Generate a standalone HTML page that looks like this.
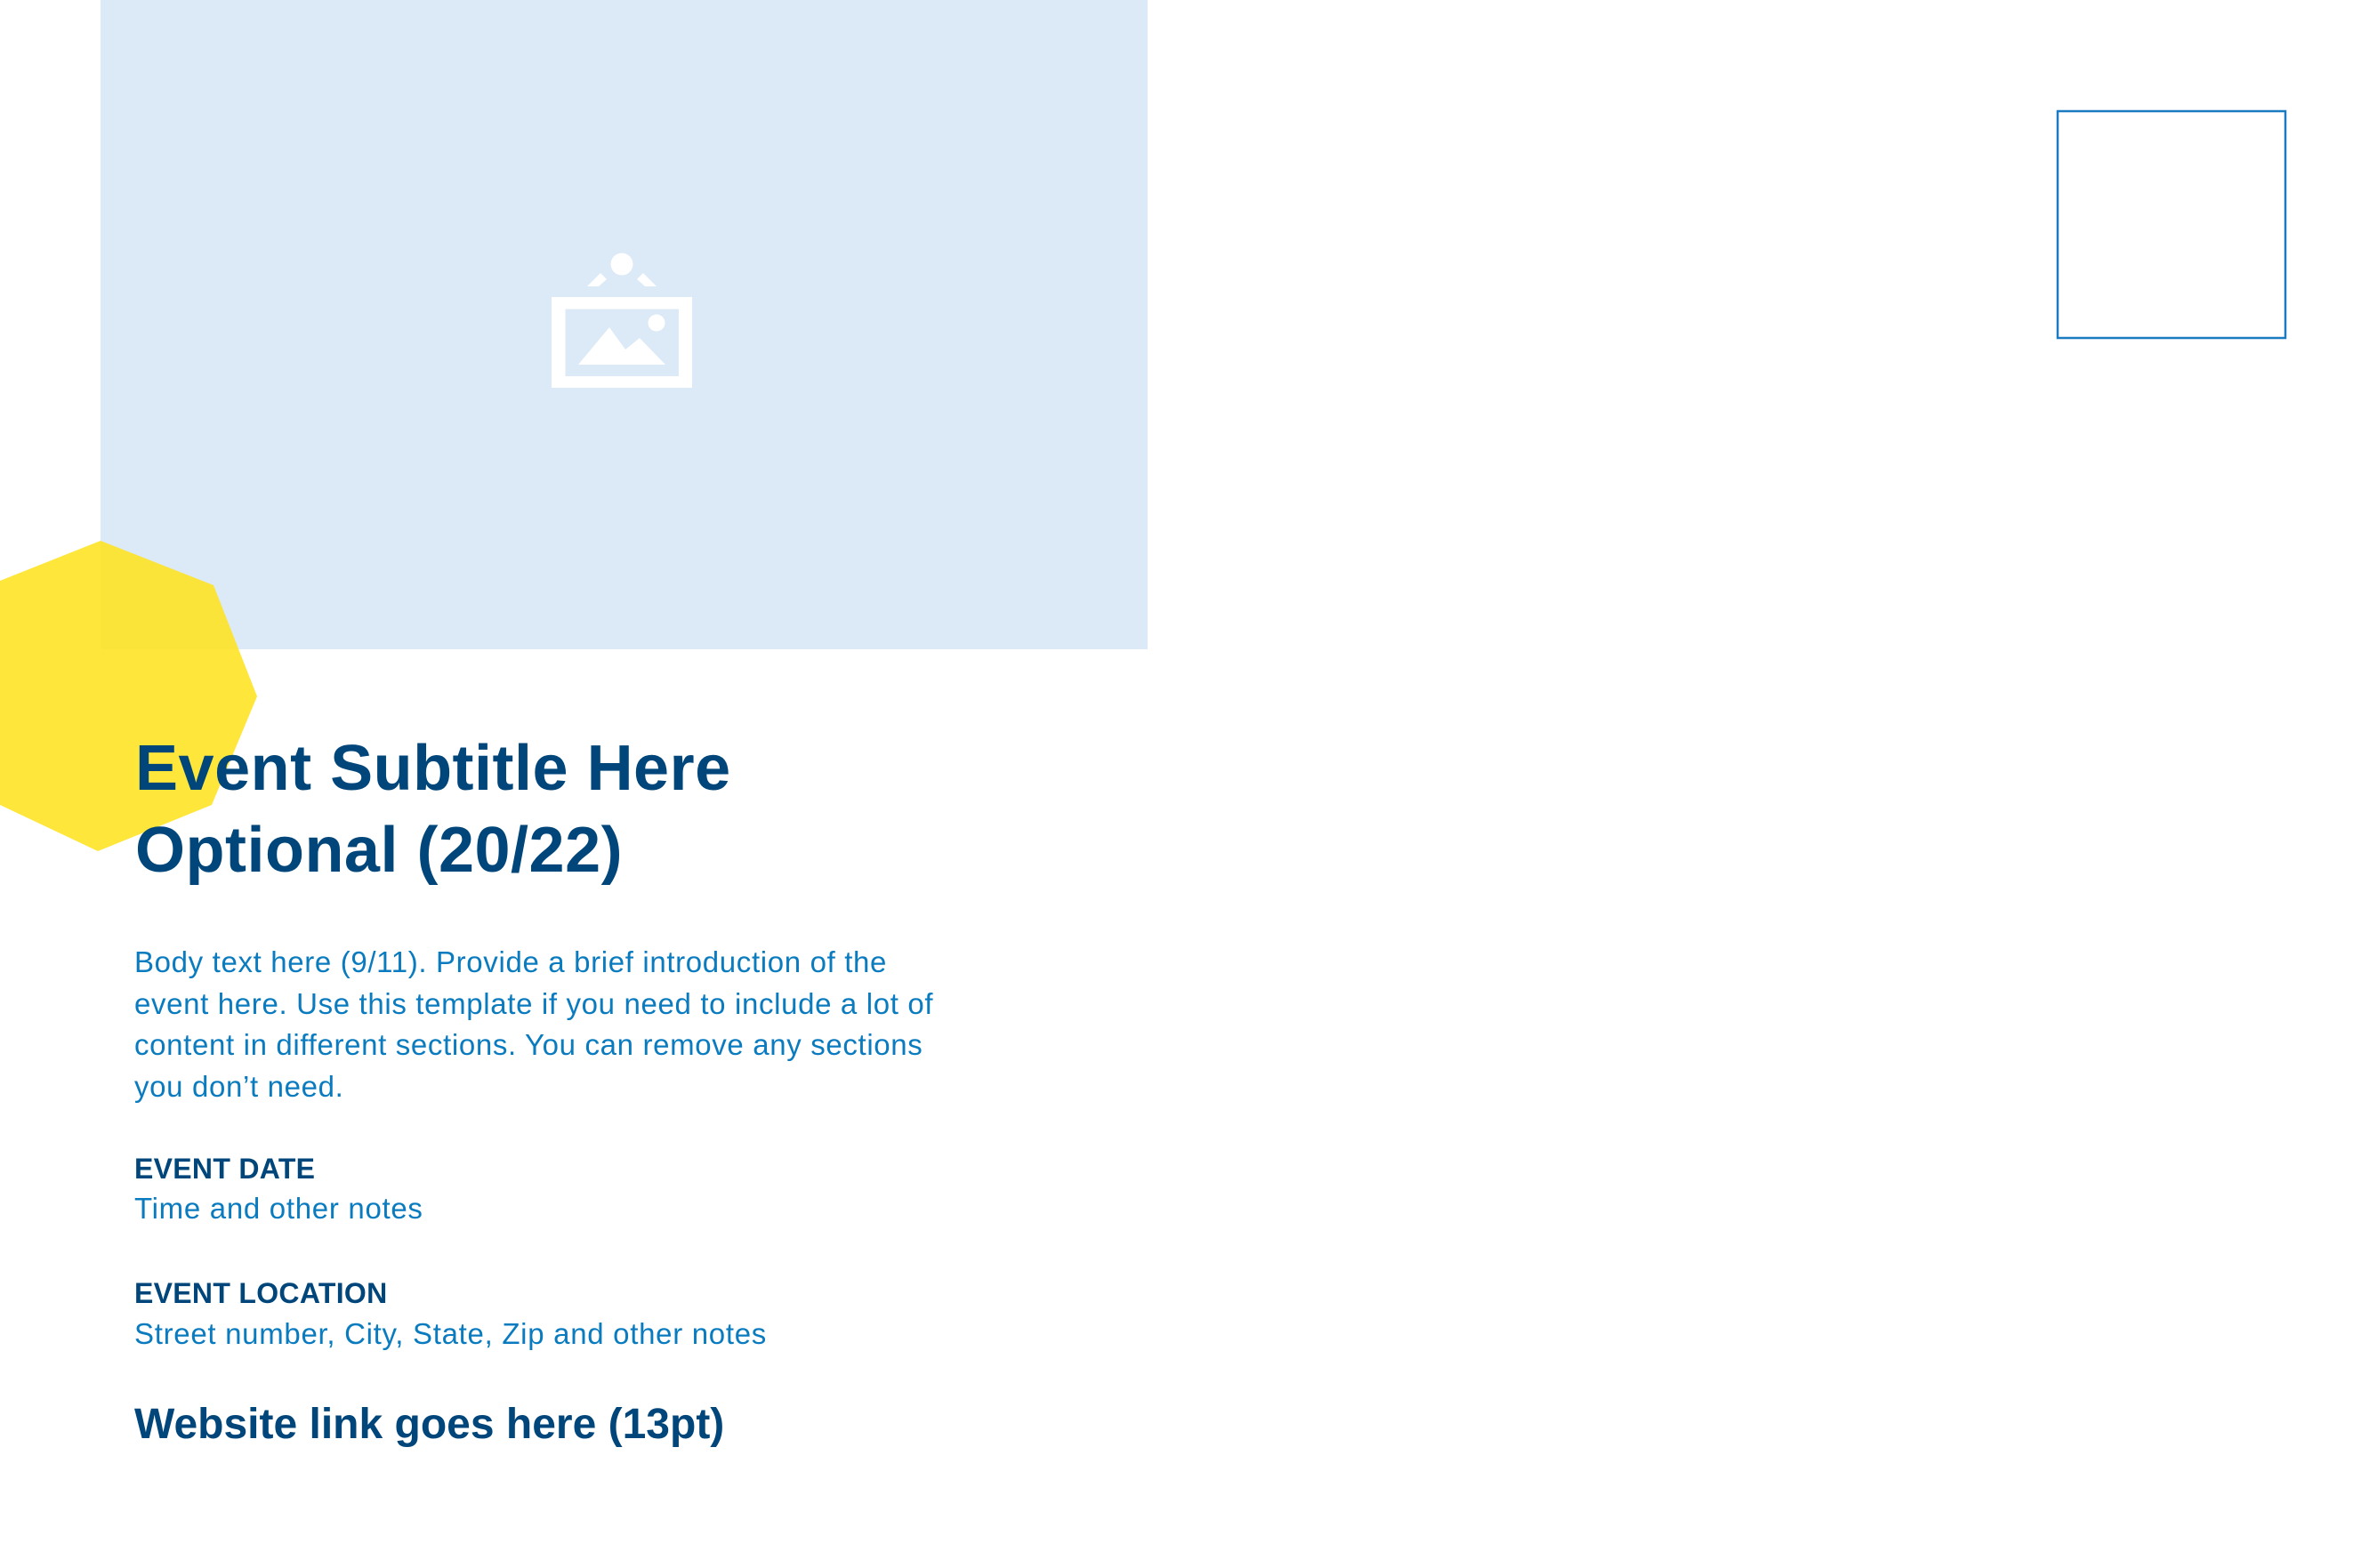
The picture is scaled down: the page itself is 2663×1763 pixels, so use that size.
<!DOCTYPE html>
<html><head><meta charset="utf-8"><style>
html,body{margin:0;padding:0;background:#fff;}
body{width:2663px;height:1763px;position:relative;overflow:hidden;font-family:"Liberation Sans",sans-serif;}
.a{position:absolute;white-space:nowrap;}
.t{left:152px;top:818px;font-size:72px;line-height:92px;font-weight:bold;color:#00467a;letter-spacing:0.5px;}
.b{left:151px;top:1059px;font-size:33px;line-height:46.5px;color:#0a7bbf;letter-spacing:0.65px;}
.h{left:151px;font-size:32px;line-height:46px;font-weight:bold;color:#00467a;letter-spacing:0.3px;}
.n{left:151px;font-size:33px;line-height:46px;color:#0a7bbf;letter-spacing:0.7px;}
.w{left:151px;top:1574px;font-size:48px;line-height:56px;font-weight:bold;color:#00467a;letter-spacing:0px;}
</style></head><body>
<svg class="a" style="left:0;top:0" width="2663" height="1763">
<rect x="113" y="0" width="1177" height="730" fill="#dce9f6"/>
<polygon points="113,608 240,658 289,783 238,905 110,957 0,905 0,653" fill="#ffe21f" opacity="0.88"/>
<rect x="2313" y="125" width="256" height="255" fill="none" stroke="#1a7bc0" stroke-width="2.5"/>
<g fill="#fff">
<circle cx="699" cy="297" r="12.5"/>
<polygon points="660,322 675,307 682,314 673,322"/>
<polygon points="738,322 723,307 716,314 725,322"/>
<path fill-rule="evenodd" d="M620,334H778V436H620Z M635.5,347.5V423H763V347.5Z"/>
<polygon points="650,410 685,368 703,393 719,380 748,410"/>
<circle cx="738" cy="363" r="9.5"/>
</g>
</svg>
<div class="a t">Event Subtitle Here<br>Optional (20/22)</div>
<div class="a b">Body text here (9/11). Provide a brief introduction of the<br>event here. Use this template if you need to include a lot of<br>content in different sections. You can remove any sections<br>you don’t need.</div>
<div class="a h" style="top:1291px">EVENT DATE</div>
<div class="a n" style="top:1336px">Time and other notes</div>
<div class="a h" style="top:1431px">EVENT LOCATION</div>
<div class="a n" style="top:1477px">Street number, City, State, Zip and other notes</div>
<div class="a w">Website link goes here (13pt)</div>
</body></html>
